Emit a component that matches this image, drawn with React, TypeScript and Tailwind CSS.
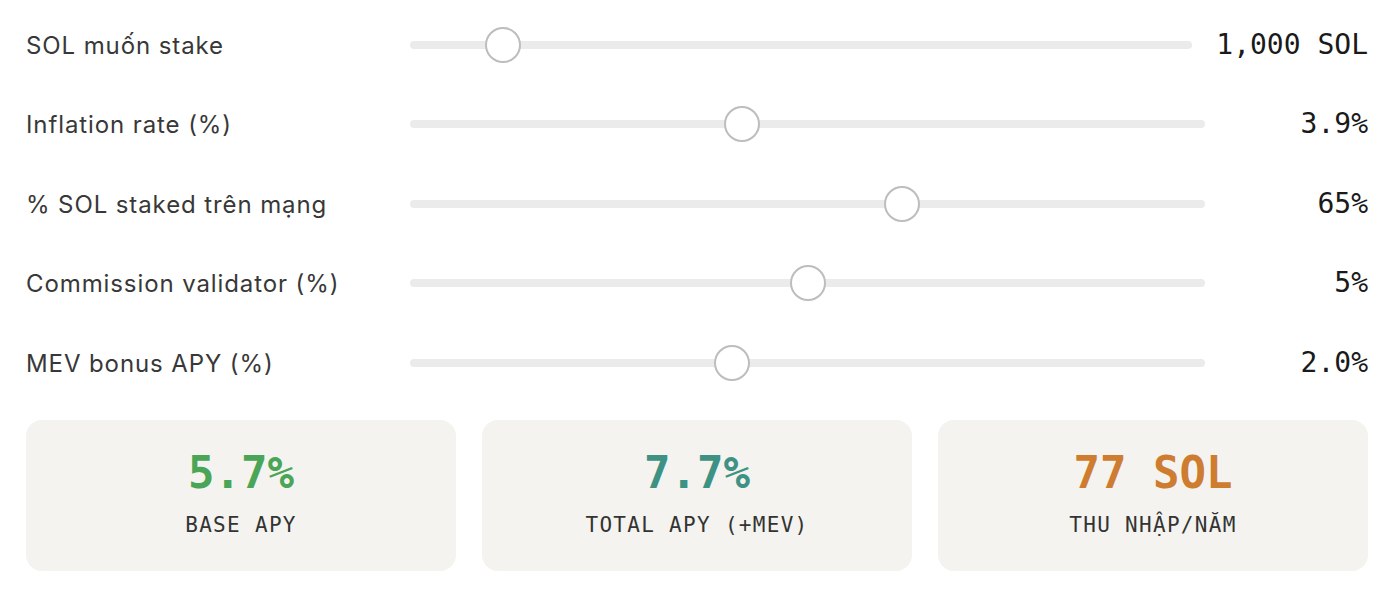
import React from 'react';

type Row = {
  label: string;
  value: number;
  min: number;
  max: number;
  display: string;
};

const sans = "font-['Inter','Noto_Sans',sans-serif]";
const mono = "font-['DejaVu_Sans_Mono','Liberation_Mono',monospace]";

function Slider({ value, min, max }: { value: number; min: number; max: number }) {
  const frac = (value - min) / (max - min);
  return (
    <div className="relative flex-1 h-9 flex items-center">
      <div className="w-full h-2 rounded-full bg-[#ebebeb]" />
      <div
        className="absolute top-0 w-9 h-9 rounded-full bg-white border-2 border-[#bdbdbd]"
        style={{ left: `calc((100% - 36px) * ${frac})` }}
      />
    </div>
  );
}

function StatCard({ value, label, color }: { value: string; label: string; color: string }) {
  return (
    <div className="flex-1 h-[151px] rounded-2xl bg-[#f4f3ef] flex flex-col items-center pt-[31px] gap-5">
      <div className={`${mono} ${color} text-[44px] leading-none font-bold`}>{value}</div>
      <div className={`${mono} text-[21px] leading-none tracking-[1.3px] text-[#333333]`}>{label}</div>
    </div>
  );
}

export default function App() {
  const stake = 1000;
  const inflation = 3.9;
  const staked = 65;
  const commission = 5;
  const mev = 2.0;

  const baseApy = (inflation / (staked / 100)) * (1 - commission / 100);
  const totalApy = baseApy + mev;
  const income = Math.round((stake * totalApy) / 100);

  const rows: Row[] = [
    { label: 'SOL muốn stake', value: stake, min: 0, max: 10000, display: '1,000 SOL' },
    { label: 'Inflation rate (%)', value: inflation, min: 1, max: 8, display: '3.9%' },
    { label: '% SOL staked trên mạng', value: staked, min: 40, max: 80, display: '65%' },
    { label: 'Commission validator (%)', value: commission, min: 0, max: 10, display: '5%' },
    { label: 'MEV bonus APY (%)', value: mev, min: 0, max: 5, display: '2.0%' },
  ];

  return (
    <div className="w-[1394px] h-[592px] bg-white px-[26px] pt-[5px]">
      <div className="flex flex-col">
        {rows.map((r) => (
          <div key={r.label} className="h-[79.5px] flex items-center gap-6">
            <div className={`${sans} w-[360px] text-[24px] tracking-[0.9px] text-[#383838] pt-[2px]`}>
              {r.label}
            </div>
            <Slider value={r.value} min={r.min} max={r.max} />
            <div className={`${mono} min-w-[139px] text-right text-[28px] text-[#1a1a1a]`}>
              {r.display}
            </div>
          </div>
        ))}
      </div>
      <div className="flex gap-[26px] mt-[17px]">
        <StatCard value={`${baseApy.toFixed(1)}%`} label="BASE APY" color="text-[#4aa557]" />
        <StatCard value={`${totalApy.toFixed(1)}%`} label="TOTAL APY (+MEV)" color="text-[#3d9284]" />
        <StatCard value={`${income} SOL`} label="THU NHẬP/NĂM" color="text-[#cd7c30]" />
      </div>
    </div>
  );
}
